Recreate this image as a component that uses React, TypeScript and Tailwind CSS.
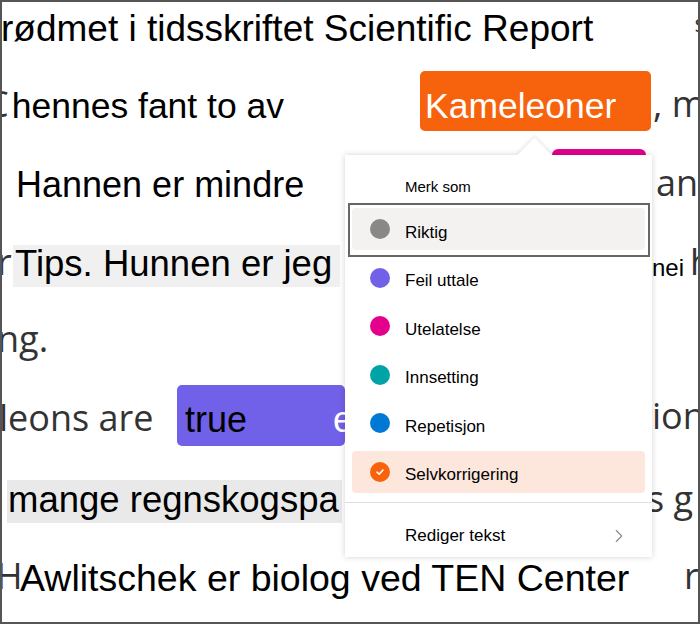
import { ChevronRight } from "lucide-react";

const sans = "font-['Liberation_Sans',Arial,sans-serif]";
const grayFont = "font-['Open_Sans',sans-serif] text-[#333333]";

const marks = [
  { label: "Riktig", dot: "bg-[#8a8886]", focused: true },
  { label: "Feil uttale", dot: "bg-[#7160e8]" },
  { label: "Utelatelse", dot: "bg-[#e3008c]" },
  { label: "Innsetting", dot: "bg-[#00a4a6]" },
  { label: "Repetisjon", dot: "bg-[#0078d4]" },
  { label: "Selvkorrigering", dot: "bg-[#f7630c]", checked: true },
];

const MarkMenu = () => (
  <div className={`absolute left-[345px] top-[155px] z-10 w-[307px] h-[402px] bg-white shadow-[0_0_6px_rgba(0,0,0,0.18)] ${sans}`}>
    {/* beak */}
    <div className="absolute left-[177px] -top-[12px] w-[25px] h-[25px] rotate-45 bg-white shadow-[-2px_-2px_4px_rgba(0,0,0,0.08)]" />
    <div className="relative bg-white">
      <div className="h-[50px] pl-[60px] pt-[22px] text-[15px] leading-[20px] text-black">Merk som</div>
      {marks.map((m) => (
        <div key={m.label} className="relative h-[48.5px] px-[7px] py-[3.25px]">
          {m.focused && (
            <div className="absolute left-[3px] right-[2px] -top-[2px] -bottom-[3px] border-2 border-[#666666]" />
          )}
          <div
            className={`flex h-[42px] items-center rounded-[4px] pl-[18px] ${m.focused ? "bg-[#f3f2f1]" : ""} ${
              m.checked ? "bg-[#fde7dc]" : ""
            }`}
          >
            <span className={`flex w-[20px] h-[20px] shrink-0 items-center justify-center rounded-full ${m.dot}`}>
              {m.checked && (
                <svg width="10" height="10" viewBox="0 0 10 10" fill="none">
                  <path d="M2 5.2 L4.2 7.2 L8 3" stroke="white" strokeWidth="1.6" strokeLinecap="round" strokeLinejoin="round" />
                </svg>
              )}
            </span>
            <span className="ml-[15px] pt-[7px] text-[17px] leading-[20px] text-black">{m.label}</span>
          </div>
        </div>
      ))}
      <div className="mt-[6px] h-px bg-[#e1dfdd]" />
      <div className="flex h-[54px] items-start pl-[60px] pt-[23px]">
        <span className="text-[17px] leading-[20px] text-black">Rediger tekst</span>
        <ChevronRight className="ml-auto mr-[22px] -mt-[1px] w-[22px] h-[22px] text-[#8a8886]" strokeWidth={1.2} />
      </div>
    </div>
  </div>
);

export default function App() {
  return (
    <div className="relative w-[700px] h-[624px] overflow-hidden bg-white">
      <div className={`flex flex-col whitespace-nowrap text-black ${sans}`}>
        {/* line 1 */}
        <div className="flex h-[71px] items-start overflow-hidden">
          <span className="ml-[1px] mt-[9px] text-[37px] leading-[40px]">rødmet i tidsskriftet Scientific Report</span>
          <span className={`ml-auto -mr-[6px] mt-[8px] text-[24px] leading-[30px] ${grayFont}`}>s</span>
        </div>

        {/* line 2 */}
        <div className="flex h-[77px] items-start overflow-hidden">
          <div className="flex w-[420px] shrink-0 overflow-hidden">
            <span className={`-ml-[14px] mt-[13px] text-[36px] leading-[40px] ${grayFont}`}>C</span>
            <span className="ml-[3px] mt-[14.5px] text-[35.5px] leading-[40px]">hennes fant to av</span>
          </div>
          <div className="flex w-[231px] h-[60px] shrink-0 rounded-[5px] bg-[#f7630c] pl-[5px] pt-[14.5px]">
            <span className="text-[35.5px] leading-[40px] text-white">Kameleoner</span>
          </div>
          <span className={`ml-[2px] mt-[13px] text-[36px] leading-[40px] ${grayFont}`}>, m</span>
        </div>

        {/* line 3 */}
        <div className="flex h-[82px] items-start overflow-hidden">
          <div className="flex w-[552px] shrink-0 overflow-hidden">
            <span className="-ml-[6px] mt-[16.5px] text-[36px] leading-[40px]">.</span>
            <span className="ml-[12px] mt-[16.5px] text-[36px] leading-[40px]">Hannen er mindre</span>
          </div>
          <div className="w-[94px] h-[60px] shrink-0 mt-[1px] rounded-[6px] bg-[#e3008c]" />
          <span className={`ml-[10px] mt-[15px] text-[36px] leading-[40px] ${grayFont}`}>an</span>
        </div>

        {/* line 4 */}
        <div className="flex h-[70px] items-start overflow-hidden">
          <div className="flex w-[652px] shrink-0 items-start overflow-hidden">
            <span className={`-ml-[3px] mt-[12px] w-[16px] text-[36px] leading-[40px] ${grayFont}`}>r</span>
            <div className="mt-[15px] flex h-[42px] w-[327px] bg-[#f0f0f0] pl-[2px]">
              <span className="text-[36.5px] leading-[38px]">Tips. Hunnen er jeg</span>
            </div>
          </div>
          <span className="mt-[23.5px] bg-white pr-[4px] text-[24px] leading-[28px]">nei</span>
          <span className={`mt-[12px] ml-[2px] text-[36px] leading-[40px] ${grayFont}`}>h</span>
        </div>

        {/* line 5 */}
        <div className="flex h-[70px] items-start overflow-hidden">
          <span className={`-ml-[3px] mt-[19px] text-[36px] leading-[40px] ${grayFont}`}>ng.</span>
        </div>

        {/* line 6 */}
        <div className="flex h-[95px] items-start overflow-hidden">
          <div className="flex w-[177px] shrink-0 overflow-hidden">
            <span className={`-ml-[1px] mt-[28px] text-[36px] leading-[40px] ${grayFont}`}>leons are</span>
          </div>
          <div className="mt-[15px] flex h-[61px] w-[168px] shrink-0 rounded-[5px] bg-[#7160e8] pl-[8px] pt-[14.5px]">
            <span className="text-[36px] leading-[40px]">true</span>
            <span className="ml-[84px] mt-[2px] h-[30px] w-px bg-white/40" />
            <span className="ml-[2px] text-[36px] leading-[40px] text-white">e</span>
          </div>
          <span className={`ml-[307px] mt-[26px] text-[36px] leading-[40px] ${grayFont}`}>ion</span>
        </div>

        {/* line 7 */}
        <div className="flex h-[85px] items-start overflow-hidden">
          <div className="ml-[7px] mt-[15px] flex h-[43px] w-[335px] shrink-0 overflow-hidden bg-[#e9e9e9] pl-[1px]">
            <span className="text-[36.5px] leading-[40px]">mange regnskogspa</span>
          </div>
          <span className={`ml-[305px] mt-[14px] text-[36px] leading-[40px] ${grayFont}`}>s g</span>
        </div>

        {/* line 8 */}
        <div className="flex h-[74px] items-start overflow-hidden">
          <span className={`-ml-[4px] mt-[6px] w-[24px] shrink-0 text-[36px] leading-[40px] ${grayFont}`}>H</span>
          <div className="mt-[7px] flex h-[60px] w-[620px] shrink-0 bg-white">
            <span className="mt-[0.5px] text-[37.5px] leading-[40px]">Awlitschek er biolog ved TEN Center</span>
          </div>
          <span className={`ml-[44px] mt-[6px] text-[36px] leading-[40px] ${grayFont}`}>r</span>
        </div>
      </div>

      <MarkMenu />

      {/* frame */}
      <div className="pointer-events-none absolute inset-0 z-20 border-2 border-[#555555]" />
    </div>
  );
}
